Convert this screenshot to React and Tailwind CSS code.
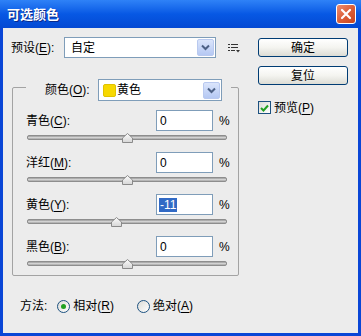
import React from "react";

function U({ children }) {
  return <span className="underline underline-offset-2">{children}</span>;
}

function ComboBtn() {
  return (
    <div className="flex items-center justify-center w-[17px] h-[17px] mr-[1px] rounded-[2px] border border-[#b9c9ef] bg-gradient-to-b from-[#dbe5fb] to-[#b5c8f3]">
      <svg width="9" height="7" viewBox="0 0 9 7">
        <path d="M1 1.5 L4.5 5 L8 1.5" fill="none" stroke="#4d6185" strokeWidth="2" />
      </svg>
    </div>
  );
}

function Slider({ value }) {
  const left = 100 + value - 5.5;
  return (
    <div className="relative ml-[14px] w-[200px] h-[21px] pt-[4px]">
      <div className="h-[5px] rounded-[2px] border border-[#8d8d8d] bg-gradient-to-b from-[#9a9a9a] via-[#d2d2d2] to-[#a8a8a8]" />
      <svg className="absolute top-[2px]" style={{ left }} width="11" height="10" viewBox="0 0 11 10">
        <defs>
          <linearGradient id="tg" x1="0" y1="0" x2="0" y2="1">
            <stop offset="0" stopColor="#fbfbfb" />
            <stop offset="1" stopColor="#d6d6d6" />
          </linearGradient>
        </defs>
        <polygon points="5.5,0.5 10.5,5 10.5,9.5 0.5,9.5 0.5,5" fill="url(#tg)" stroke="#8a8a8a" />
      </svg>
    </div>
  );
}

function Row({ label, value, selected }) {
  return (
    <>
      <div className="flex items-center h-[21px]">
        <div className="w-[143px] pl-[13px]">{label}</div>
        <div className="w-[57px] h-[21px] bg-white border border-[#7f9db9] flex items-center pl-[2px]">
          {selected ? (
            <span className="bg-[#316ac5] text-white px-[1px] leading-[14px]">{value}</span>
          ) : (
            <span className="pl-[1px]">{value}</span>
          )}
        </div>
        <div className="ml-[6px]">%</div>
      </div>
      <Slider value={selected ? -11 : 0} />
    </>
  );
}

function Radio({ checked }) {
  return (
    <div className="w-[13px] h-[13px] rounded-full border border-[#1c5180] bg-gradient-to-br from-[#dcdcd7] to-white flex items-center justify-center">
      {checked && <div className="w-[5px] h-[5px] rounded-full bg-[#21a121]" />}
    </div>
  );
}

function XpButton({ children }) {
  return (
    <div className="w-[90px] h-[19px] rounded-[3px] border border-[#003c74] bg-gradient-to-b from-white via-[#f4f4f0] to-[#dcdcd5] flex items-center justify-center">
      {children}
    </div>
  );
}

export default function App() {
  return (
    <div className="w-[361px] h-[336px] flex flex-col bg-[#0a46d6] text-[12px] leading-none text-black font-['Liberation_Sans','Noto_Sans_CJK_SC',sans-serif]">
      <div className="h-[28px] flex items-center justify-between pl-[7px] pr-[5px] bg-gradient-to-b from-[#2f82f7] via-[#0758e4] to-[#0449d3]">
        <span className="text-white font-bold text-[13px] [text-shadow:1px_1px_#0a2a8a]">可选颜色</span>
        <div className="w-[20px] h-[20px] rounded-[3px] border border-white bg-gradient-to-br from-[#ec8d70] via-[#dc5f38] to-[#c8441d] flex items-center justify-center">
          <svg width="12" height="12" viewBox="0 0 12 12">
            <path d="M2 2 L10 10 M10 2 L2 10" stroke="white" strokeWidth="2.2" strokeLinecap="round" />
          </svg>
        </div>
      </div>
      <div className="flex-1 px-[3px] pb-[3px]">
        <div className="h-full bg-[#ececec] flex">
          <div className="w-[255px] pl-[8px] pt-[9px]">
            <div className="flex items-center h-[21px]">
              <div className="w-[53px]">预设(<U>E</U>):</div>
              <div className="w-[152px] h-[21px] bg-white border border-[#7f9db9] flex items-center justify-between pl-[6px]">
                <span>自定</span>
                <ComboBtn />
              </div>
              <svg className="ml-[12px]" width="12" height="10" viewBox="0 0 12 10">
                <rect x="0" y="1" width="2" height="1" fill="#333" />
                <rect x="3" y="1" width="7" height="1" fill="#333" />
                <rect x="0" y="4" width="2" height="1" fill="#333" />
                <rect x="3" y="4" width="7" height="1" fill="#333" />
                <rect x="0" y="7" width="2" height="1" fill="#333" />
                <rect x="3" y="7" width="4" height="1" fill="#333" />
                <path d="M8 7 L12 7 L10 9.5 Z" fill="#333" />
              </svg>
            </div>
            <div className="mt-[29px] ml-[1px] w-[227px] h-[189px] border border-[#a3a3a3] rounded-[2px]">
              <div className="-mt-[9px] ml-[13px] w-[205px] h-[22px] bg-[#ececec] flex items-center pl-[19px]">
                <div className="w-[53px]">颜色(<U>O</U>):</div>
                <div className="w-[124px] h-[22px] bg-white border border-[#7f9db9] flex items-center justify-between pl-[4px]">
                  <div className="flex items-center">
                    <div className="w-[13px] h-[13px] rounded-[2px] bg-[#f7d800] border border-[#e0c200]" />
                    <span className="ml-[1px]">黄色</span>
                  </div>
                  <ComboBtn />
                </div>
              </div>
              <div className="pt-[9px]">
                <Row label={<>青色(<U>C</U>):</>} value="0" />
                <Row label={<>洋红(<U>M</U>):</>} value="0" />
                <Row label={<>黄色(<U>Y</U>):</>} value="-11" selected />
                <Row label={<>黑色(<U>B</U>):</>} value="0" />
              </div>
            </div>
            <div className="mt-[22px] ml-[9px] flex items-center h-[16px]">
              <span>方法:</span>
              <div className="ml-[10px]"><Radio checked /></div>
              <span className="ml-[3px]">相对(<U>R</U>)</span>
              <div className="ml-[23px]"><Radio /></div>
              <span className="ml-[3px]">绝对(<U>A</U>)</span>
            </div>
          </div>
          <div className="pt-[10px]">
            <XpButton>确定</XpButton>
            <div className="mt-[9px]"><XpButton>复位</XpButton></div>
            <div className="mt-[16px] flex items-center">
              <div className="w-[13px] h-[13px] border border-[#1c5180] bg-gradient-to-br from-[#dcdcd7] to-white flex items-center justify-center">
                <svg width="9" height="8" viewBox="0 0 9 8">
                  <path d="M1 4 L3.5 6.5 L8 1.5" fill="none" stroke="#21a121" strokeWidth="2" />
                </svg>
              </div>
              <span className="ml-[3px]">预览(<U>P</U>)</span>
            </div>
          </div>
        </div>
      </div>
    </div>
  );
}
